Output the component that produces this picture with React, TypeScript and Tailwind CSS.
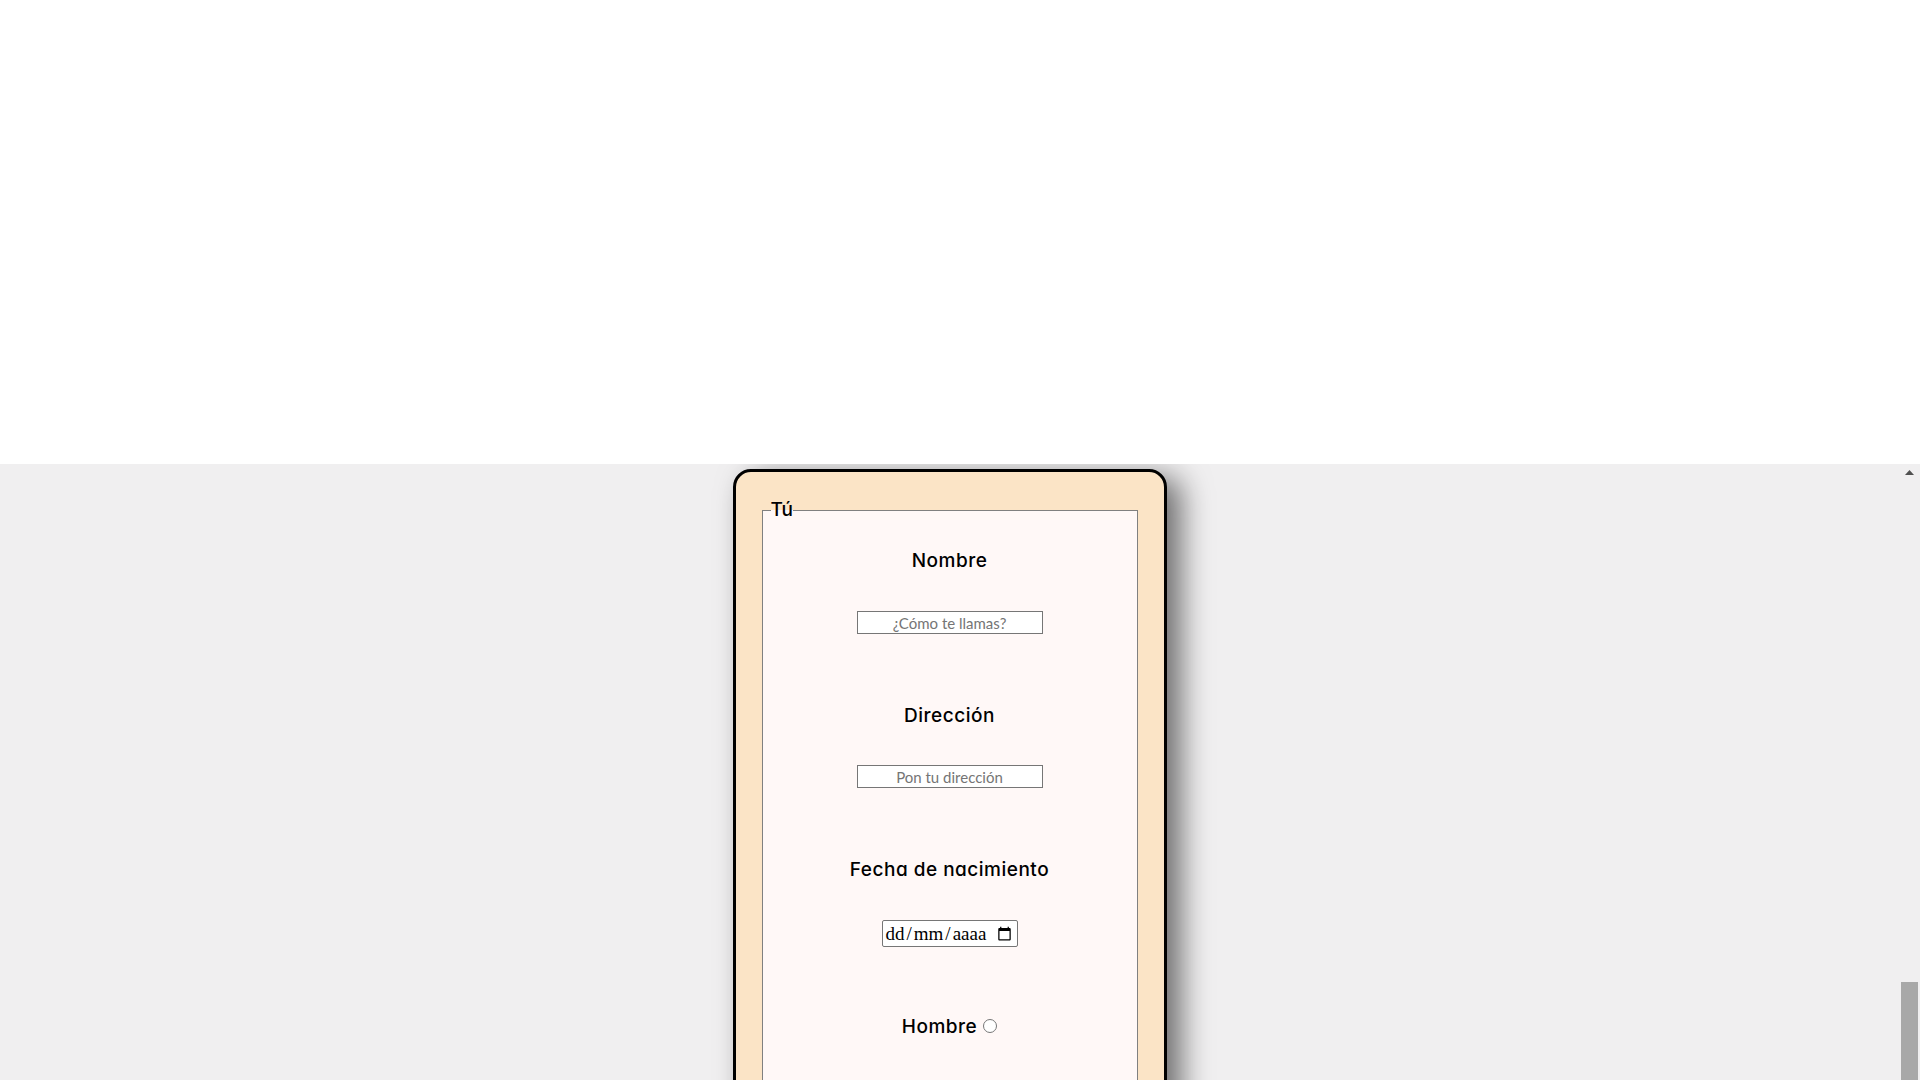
function CalendarIcon() {
  return (
    <svg width="15" height="15" viewBox="0 0 24 24" aria-hidden="true">
      <path
        fill="#000"
        d="M20 3h-1V1h-2v2H7V1H5v2H4c-1.1 0-2 .9-2 2v16c0 1.1.9 2 2 2h16c1.1 0 2-.9 2-2V5c0-1.1-.9-2-2-2zm0 18H4V8h16v13z"
      />
    </svg>
  );
}

const heading =
  "text-center text-[19px] leading-[23px] font-medium tracking-[0.5px] text-black font-['Inter','Noto_Sans',sans-serif] [font-feature-settings:'cv11']";

const textInput =
  "mx-auto block h-[23px] w-[186px] border border-[#767676] bg-white px-1 text-center text-[15px] leading-[21px] text-black font-['Lato','Open_Sans',sans-serif] placeholder:text-[#757575] outline-none";

function Scrollbar() {
  return (
    <div className="flex w-[19px] shrink-0 flex-col pr-[2px]">
      <div className="flex h-[15px] items-center justify-center pt-[2px]">
        <svg width="9" height="5" viewBox="0 0 9 5" aria-hidden="true">
          <path d="M4.5 0L9 5H0z" fill="#505050" />
        </svg>
      </div>
      <div className="mt-[503px] h-[300px] w-[17px] bg-[#a8a8a8]" />
    </div>
  );
}

export default function App() {
  return (
    <div className="h-screen overflow-hidden bg-white">
      <div className="h-[464px] bg-white" />
      <div className="flex h-[1080px] bg-[#f0eff0]">
        <div className="flex flex-1 flex-col items-center overflow-hidden pt-[5px]">
          <form className="w-[434px] -translate-x-[1px] rounded-[18px] border-[3px] border-black bg-[#fbe4c6] px-[26px] pt-[26px] pb-[30px] shadow-[14px_8px_30px_rgba(0,0,0,0.55)]">
            <fieldset className="border border-[#808080] bg-[#fff8f7] px-2 pb-[60px]">
              <legend className="text-[19px] leading-[24px] font-medium text-black font-['Inter','Noto_Sans',sans-serif]">
                Tú
              </legend>
              <div className="pt-[27px]">
                <h3 className={heading}>Nombre</h3>
                <input
                  type="text"
                  placeholder="¿Cómo te llamas?"
                  className={`mt-[39px] ${textInput}`}
                />

                <h3 className={`mt-[70px] ${heading}`}>Dirección</h3>
                <input
                  type="text"
                  placeholder="Pon tu dirección"
                  className={`mt-[38px] ${textInput}`}
                />

                <h3 className={`mt-[70px] ${heading}`}>Fecha de nacimiento</h3>
                <div className="mx-auto mt-[39px] flex h-[27px] w-[136px] items-center justify-between rounded-[2px] border border-[#767676] bg-white pl-[3px] pr-[5px] text-[19px] leading-[23px] text-black font-['Liberation_Serif',serif]">
                  <span className="flex">
                    <span>dd</span>
                    <span className="px-[2px]">/</span>
                    <span>mm</span>
                    <span className="px-[2px]">/</span>
                    <span>aaaa</span>
                  </span>
                  <CalendarIcon />
                </div>

                <div className="mt-[68px] text-center">
                  <span className={`inline ${heading}`}>Hombre</span>
                  <input type="radio" name="sexo" className="ml-[6px] h-[14px] w-[14px] align-baseline" />
                </div>

                <div className="mt-[60px] text-center">
                  <span className={`inline ${heading}`}>Mujer</span>
                  <input type="radio" name="sexo" className="ml-[6px] h-[14px] w-[14px] align-baseline" />
                </div>

                <h3 className={`mt-[70px] ${heading}`}>Correo electrónico</h3>
                <input
                  type="email"
                  placeholder="tu@correo.com"
                  className={`mt-[39px] ${textInput}`}
                />
              </div>
            </fieldset>
          </form>
        </div>
        <Scrollbar />
      </div>
    </div>
  );
}
